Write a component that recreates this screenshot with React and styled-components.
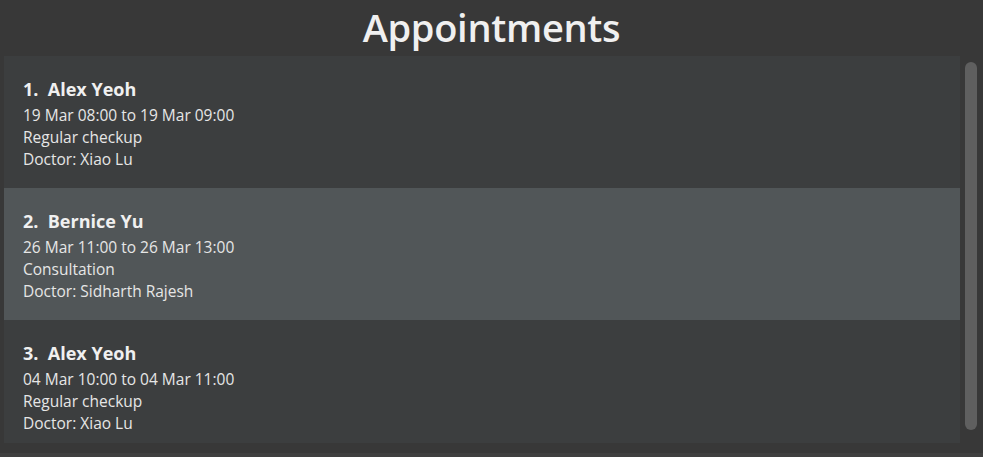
import React from "react";
import styled, { createGlobalStyle } from "styled-components";

const appointments = [
  {
    name: "Alex Yeoh",
    time: "19 Mar 08:00 to 19 Mar 09:00",
    reason: "Regular checkup",
    doctor: "Xiao Lu",
  },
  {
    name: "Bernice Yu",
    time: "26 Mar 11:00 to 26 Mar 13:00",
    reason: "Consultation",
    doctor: "Sidharth Rajesh",
  },
  {
    name: "Alex Yeoh",
    time: "04 Mar 10:00 to 04 Mar 11:00",
    reason: "Regular checkup",
    doctor: "Xiao Lu",
  },
];

function App() {
  const selected = 1;

  return (
    <>
      <GlobalStyle />
      <Page>
        <Title>Appointments</Title>
        <ListArea>
          <List>
            {appointments.map((a, i) => (
              <Card key={i} selected={i === selected}>
                <Name>{i + 1 + ".  " + a.name}</Name>
                <Detail>{a.time}</Detail>
                <Detail>{a.reason}</Detail>
                <Detail>Doctor: {a.doctor}</Detail>
              </Card>
            ))}
          </List>
          <Track>
            <Thumb />
          </Track>
        </ListArea>
        <Footer />
      </Page>
    </>
  );
}

export default App;

const GlobalStyle = createGlobalStyle`
  html, body {
    margin: 0;
    background: #383838;
  }
`;

const Page = styled.div`
  height: 457px;
  display: flex;
  flex-direction: column;
  background: #383838;
  font-family: "Open Sans", "Noto Sans", sans-serif;
  color: #eeeeee;
  overflow: hidden;
`;

const Title = styled.h1`
  margin: 0;
  height: 56px;
  font-size: 38px;
  font-weight: 600;
  line-height: 54px;
  text-align: center;
  color: #f0f0f0;
  letter-spacing: -0.3px;
`;

const ListArea = styled.div`
  display: flex;
  height: 387px;
  padding-left: 4px;
`;

const List = styled.div`
  width: 956px;
  height: 387px;
  overflow: hidden;
  background: #3c3e3f;
`;

const Card = styled.div`
  height: 132px;
  box-sizing: border-box;
  padding: 21px 0 0 19px;
  background: ${(p) => (p.selected ? "#515658" : "transparent")};
`;

const Name = styled.div`
  font-size: 18px;
  font-weight: 700;
  line-height: 24px;
  height: 27px;
  white-space: pre;
  color: #f0f0f0;
`;

const Detail = styled.div`
  font-size: 15.5px;
  line-height: 22px;
  color: #e6e6e6;
`;

const Track = styled.div`
  flex: 1;
  display: flex;
  justify-content: center;
  padding-top: 6px;
  padding-right: 2px;
`;

const Thumb = styled.div`
  width: 12px;
  height: 368px;
  border-radius: 6px;
  background: #5f5f5f;
`;

const Footer = styled.div`
  height: 10px;
  border-bottom: 4px solid #3f3f3f;
`;
